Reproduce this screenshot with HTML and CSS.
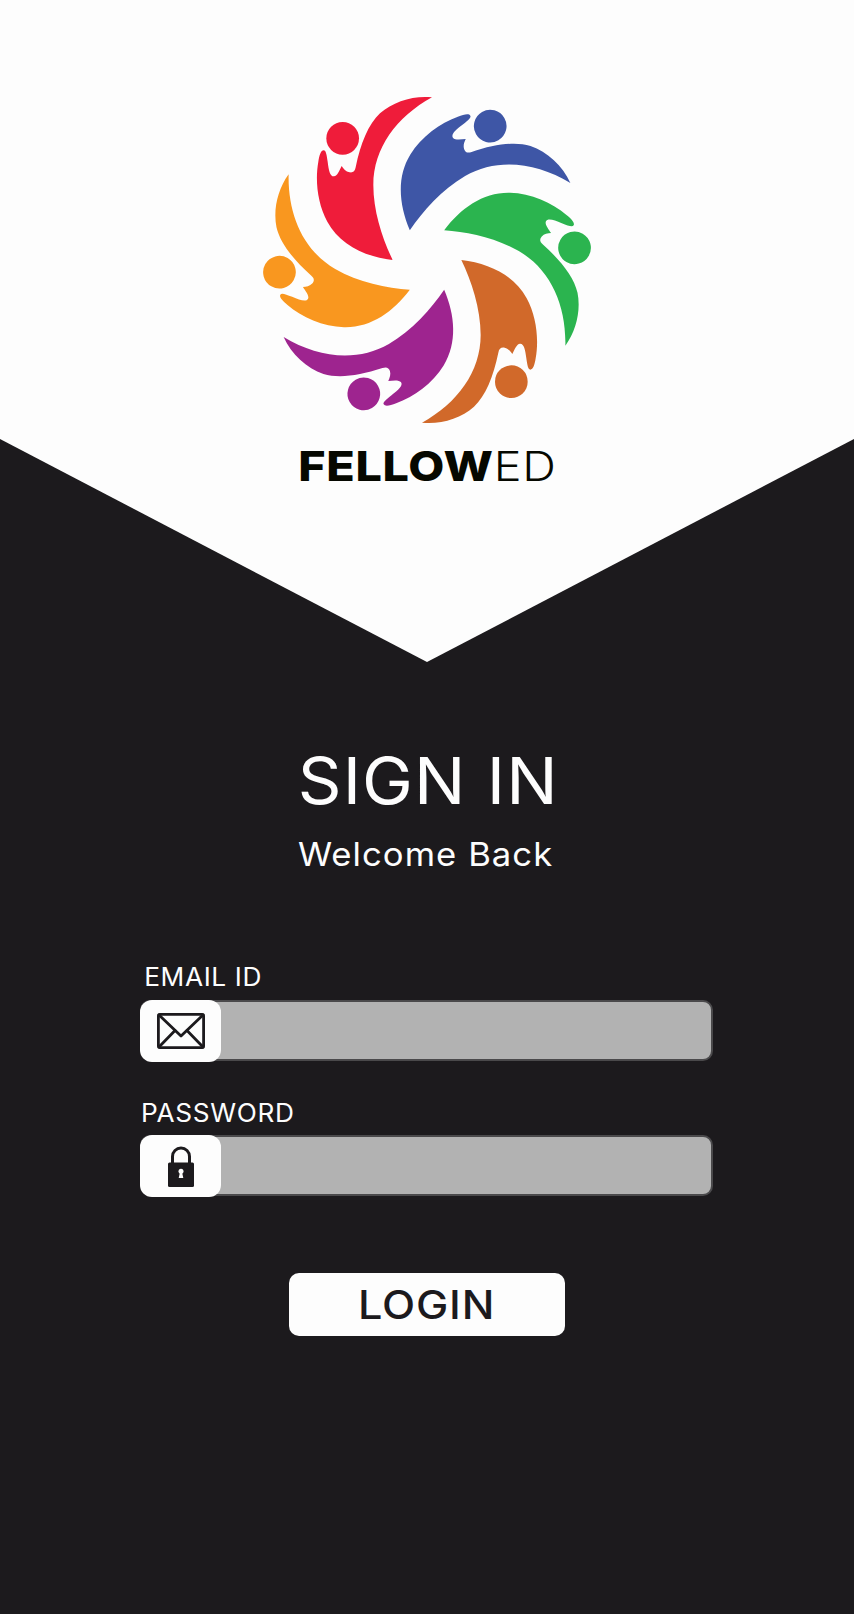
FILE: index.html
```html
<!DOCTYPE html>
<html lang="en">
<head>
<meta charset="utf-8">
<title>FellowEd - Sign In</title>
<link rel="stylesheet" href="styles.css">
</head>
<body>
<main class="page">
  <header class="hero">
    <svg class="logo" viewBox="0 0 1140 1080" width="380" height="360" role="img" aria-label="FellowEd logo">
      <defs>
        <path id="body" d="M458 540C428 478 400 395 400 315C400 205 470 110 576 52C520 46 460 65 420 100C385 133 362 190 347 262C345 275 338 279 328 277C318 275 310 266 305 258C298 272 292 288 282 289C270 290 266 270 263 245C260 225 258 211 251 211C243 211 238 225 235 245C225 300 232 370 262 425C300 495 375 530 458 540Z"/>
      </defs>
      <g class="logo-red"><use href="#body"/><circle cx="308" cy="175" r="49"/></g>
      <g class="logo-blue" transform="rotate(60 561 540)"><use href="#body"/><circle cx="308" cy="175" r="49"/></g>
      <g class="logo-green" transform="rotate(120 561 540)"><use href="#body"/><circle cx="308" cy="175" r="49"/></g>
      <g class="logo-brown" transform="rotate(180 561 540)"><use href="#body"/><circle cx="308" cy="175" r="49"/></g>
      <g class="logo-purple" transform="rotate(240 561 540)"><use href="#body"/><circle cx="308" cy="175" r="49"/></g>
      <g class="logo-orange" transform="rotate(300 561 540)"><use href="#body"/><circle cx="308" cy="175" r="49"/></g>
    </svg>
    <div class="brand"><b>FELLOW</b>ED</div>
  </header>

  <section class="intro">
    <h1>SIGN IN</h1>
    <p>Welcome Back</p>
  </section>

  <form class="form">
    <label class="label label-email" for="email">EMAIL ID</label>
    <div class="field field-email">
      <span class="field-icon">
        <svg viewBox="0 0 48 36" width="48" height="36" fill="none" stroke="#1c1a1d" stroke-width="2.800" stroke-linejoin="round" stroke-linecap="round">
          <rect x="1.400" y="1.400" width="45.200" height="33.200" rx="1.500"/>
          <path d="M2 2L24 23L46 2"/>
          <path d="M2 34L18 17.500M46 34L30 17.500"/>
        </svg>
      </span>
      <input id="email" class="field-input" type="text">
    </div>

    <label class="label label-password" for="password">PASSWORD</label>
    <div class="field field-password">
      <span class="field-icon">
        <svg viewBox="0 0 26 41" width="26" height="41">
          <path d="M4.500 18V10.500a8.500 8.500 0 0 1 17 0V18" fill="none" stroke="#1c1a1d" stroke-width="3"/>
          <rect x="0" y="16.500" width="26" height="24.500" rx="1.500" fill="#1c1a1d"/>
          <circle cx="13" cy="25.300" r="2.500" fill="#fdfdfd"/>
          <path d="M12 26h2l1.300 6h-4.600z" fill="#fdfdfd"/>
        </svg>
      </span>
      <input id="password" class="field-input" type="password">
    </div>

    <button class="login" type="button"><span class="login-text">LOGIN</span></button>
  </form>
</main>
</body>
</html>
```
FILE: styles.css
```css
* { box-sizing: border-box; }
html, body { margin: 0; padding: 0; }
body {
  background: #1c1a1d;
  font-family: Inter, "Open Sans", sans-serif;
  color: #fdfdfd;
}
.page {
  width: 854px;
  min-height: 1614px;
  display: flex;
  flex-direction: column;
  align-items: center;
}
.hero {
  width: 100%;
  height: 662px;
  background: #fdfdfd;
  clip-path: polygon(0 0, 100% 0, 100% 439px, 50% 100%, 0 439px);
  display: flex;
  flex-direction: column;
  align-items: center;
  padding-top: 80px;
}
.logo { display: block; margin-left: 6px; }
.logo-red { fill: #ef1c3a; }
.logo-blue { fill: #3e56a6; }
.logo-green { fill: #2bb44f; }
.logo-brown { fill: #d1692a; }
.logo-purple { fill: #9e248f; }
.logo-orange { fill: #f9971f; }
.brand {
  margin-top: 1px;
  font-size: 41px;
  line-height: 50px;
  font-weight: 300;
  color: #060800;
  letter-spacing: 0.600px;
  transform: scaleX(1.14);
}
.brand b { font-weight: 800; }
.intro {
  margin-top: 81px;
  text-align: center;
}
.intro h1 {
  margin: 0;
  padding-left: 2px;
  font-size: 65px;
  line-height: 76px;
  font-weight: 380;
  letter-spacing: 1px;
  transform: scaleX(1.050);
}
.intro p {
  margin: 15px 0 0;
  padding-right: 3px;
  font-size: 33px;
  line-height: 40px;
  font-weight: 400;
  letter-spacing: 1px;
  transform: scaleX(1.050);
}
.form {
  width: 573px;
  margin-top: 88px;
  margin-right: 1px;
  display: flex;
  flex-direction: column;
}
.label {
  display: block;
  font-size: 25px;
  line-height: 30px;
  font-weight: 400;
  letter-spacing: 0.600px;
  transform: scaleX(1.050);
  transform-origin: left center;
}
.label-email { padding-left: 4px; }
.label-password { margin-top: 37px; padding-left: 1px; }
.field {
  height: 61px;
  display: flex;
  background: #b2b2b2;
  border: 2px solid #4a494b;
  border-radius: 10px;
}
.field-email { margin-top: 8px; }
.field-password { margin-top: 7px; }
.field-icon {
  flex: none;
  width: 81px;
  height: 62px;
  margin: -2px 0 0 -2px;
  background: #fdfdfd;
  border-radius: 12px;
  display: flex;
  align-items: center;
  justify-content: center;
}
.field-input {
  flex: 1;
  min-width: 0;
  border: 0;
  background: transparent;
  outline: 0;
}
.login {
  align-self: center;
  width: 276px;
  height: 63px;
  margin-top: 77px;
  margin-left: 1px;
  background: #fdfdfd;
  border: 0;
  border-radius: 10px;
  color: #1c1a1d;
  font-family: inherit;
  font-size: 40px;
  font-weight: 550;
}
.login-text {
  display: inline-block;
  letter-spacing: 0.800px;
  transform: scaleX(1.080);
}
```
